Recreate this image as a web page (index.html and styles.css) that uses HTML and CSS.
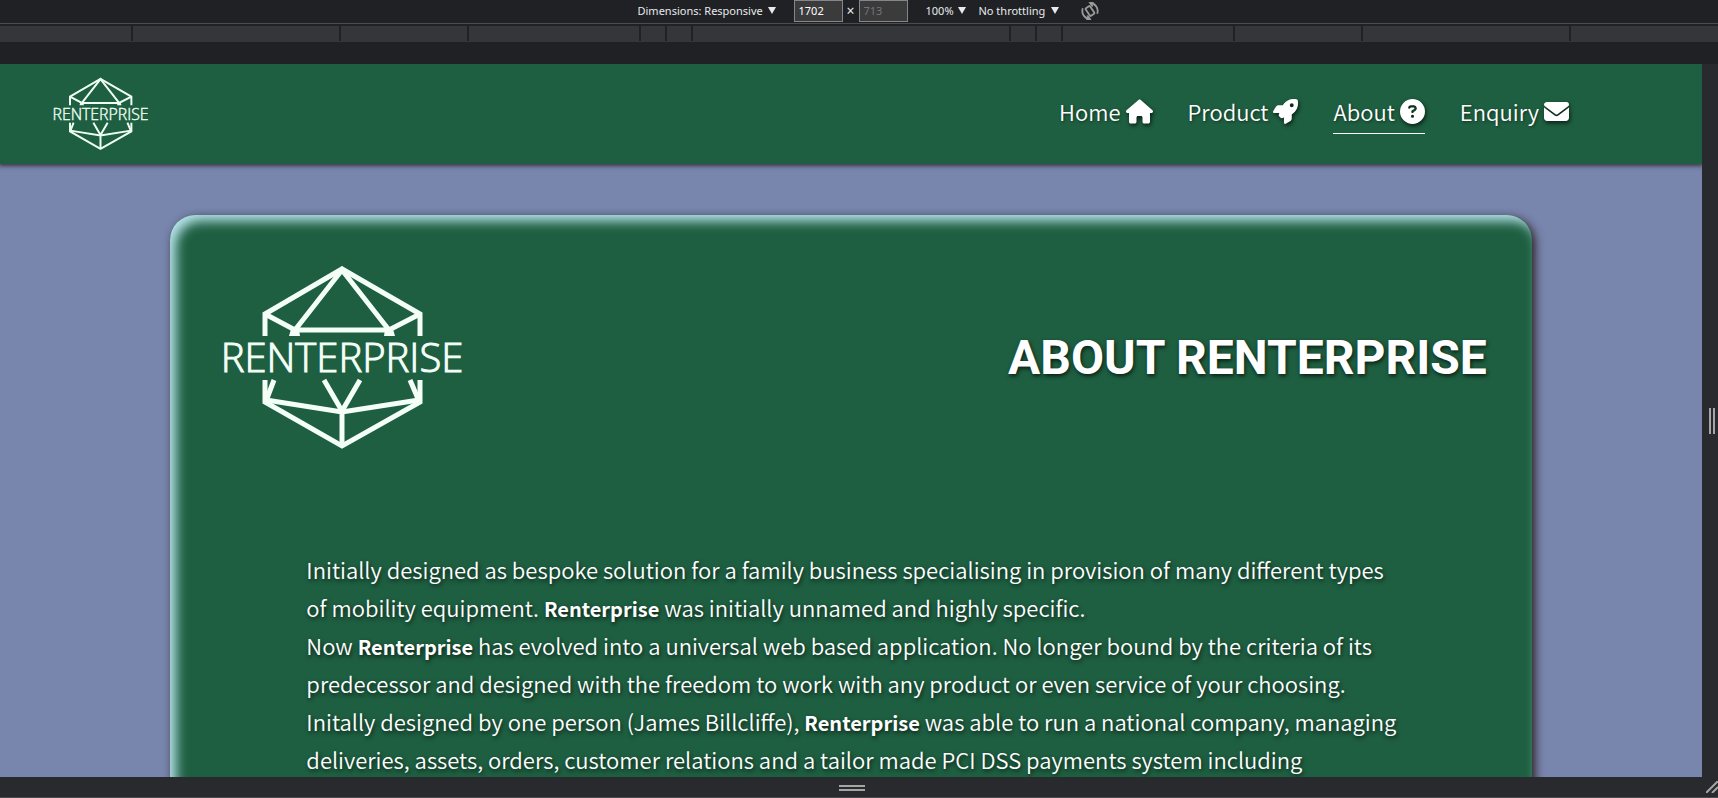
FILE: index.html
```
<!DOCTYPE html>
<html lang="en">
<head>
<meta charset="utf-8">
<title>About Renterprise</title>
<link rel="stylesheet" href="styles.css">
</head>
<body>
<svg class="defs" aria-hidden="true">
  <symbol id="logo" viewBox="0 0 240 186" overflow="visible">
    <g fill="none" stroke="currentColor" stroke-width="5">
      <path d="M43 71V49L120 4L198 49V71"/>
      <path d="M43 49L73 65H167L198 49M73 65L120 5L167 65"/>
      <path d="M43 115V137L120 181L198 137V115"/>
      <path d="M44 135L120 147L197 135M120 147V181"/>
      <path d="M102 115L120 146L138 115M52 115L44 136M188 115L197 136"/>
    </g>
    <path fill="currentColor" d="M69 64H77L78 71H67ZM163 64H171L173 71H162Z"/>
    <text class="logo-text" x="120" y="107" text-anchor="middle">RENTERPRISE</text>
  </symbol>
  <symbol id="caret" viewBox="0 0 8 7"><path fill="currentColor" d="M0 0H8L4 7Z"/></symbol>
</svg>

<div class="toolbar">
  <div class="picker">
    <select class="select select-device" aria-label="Device"><option>Dimensions: Responsive</option></select>
    <svg class="caret"><use href="#caret"/></svg>
  </div>
  <div class="size">
    <input class="size-input" type="text" value="1702" aria-label="Width">
    <span class="times">×</span>
    <input class="size-input" type="text" placeholder="713" aria-label="Height">
  </div>
  <div class="picker">
    <select class="select select-zoom" aria-label="Zoom"><option>100%</option></select>
    <svg class="caret"><use href="#caret"/></svg>
  </div>
  <div class="picker">
    <select class="select select-network" aria-label="Throttling"><option>No throttling</option></select>
    <svg class="caret"><use href="#caret"/></svg>
  </div>
  <button class="rotate" type="button" aria-label="Rotate">
    <svg viewBox="0 0 20 20" width="18" height="18" fill="none" stroke="currentColor" stroke-width="2">
      <rect x="7" y="5" width="6" height="10" rx="1" transform="rotate(-35 10 10)"/>
      <path d="M10 1A9 9 0 0 1 18 13M10 19A9 9 0 0 1 2 7M13 5L10 1L14 0M7 15L10 19L6 20"/>
    </svg>
  </button>
</div>

<div class="ruler">
  <span class="mark mark-first"></span><span class="mark w-xl"></span><span class="mark w-m"></span><span class="mark w-l"></span><span class="mark w-s"></span><span class="mark w-s"></span><span class="mark w-full"></span><span class="mark w-s"></span><span class="mark w-s"></span><span class="mark w-l"></span><span class="mark w-m"></span><span class="mark w-xl"></span><span class="mark mark-last"></span>
</div>

<div class="device">
  <div class="page">
    <header class="site-header">
      <a href="#" class="brand" aria-label="Renterprise"><svg class="brand-logo" viewBox="0 0 240 186"><use href="#logo"/></svg></a>
      <nav class="nav">
        <a class="nav-link" href="#">Home
          <svg class="icon icon-wide" viewBox="0 0 576 512"><path d="M575.8 255.500c0 18-15 32.100-32 32.100h-32l.7 160.200c0 2.700-.2 5.400-.5 8.100V472c0 22.100-17.900 40-40 40H456c-1.100 0-2.200 0-3.300-.1c-1.400 .1-2.800 .1-4.200 .1H416 392c-22.100 0-40-17.900-40-40V448 384c0-17.700-14.300-32-32-32H256c-17.700 0-32 14.300-32 32v64 24c0 22.100-17.900 40-40 40H160 128.100c-1.500 0-3-.1-4.500-.2c-1.200 .1-2.400 .2-3.600 .2H104c-22.100 0-40-17.900-40-40V360c0-.9 0-1.900 .1-2.800V287.600H32c-18 0-32-14-32-32.100c0-9 3-17 10-24L266.400 8c7-7 15-8 22-8s15 2 21 7L564.800 231.500c8 7 12 15 11 24z"/></svg></a>
        <a class="nav-link" href="#">Product
          <svg class="icon" viewBox="0 0 512 512"><path d="M156.600 384.900L125.700 354c-8.500-8.500-11.500-20.800-7.700-32.200c3-8.900 7-20.500 11.800-33.800L24 288c-8.600 0-16.600-4.600-20.900-12.100s-4.200-16.700 .2-24.100l52.500-88.500c13-21.900 36.500-35.300 61.900-35.300l82.300 0c2.400-4 4.800-7.700 7.200-11.300C289.100-4.100 411.100-8.100 483.900 5.300c11.600 2.100 20.600 11.200 22.800 22.800c13.400 72.900 9.300 194.800-111.400 276.700c-3.500 2.400-7.300 4.800-11.300 7.200v82.300c0 25.400-13.400 49-35.300 61.900l-88.500 52.500c-7.400 4.400-16.600 4.500-24.100 .2s-12.100-12.200-12.100-20.900V380.800c-14.100 4.900-26.400 8.900-35.700 11.900c-11.200 3.600-23.400 .5-31.800-7.800zM384 168a40 40 0 1 0 0-80 40 40 0 1 0 0 80z"/></svg></a>
        <a class="nav-link active" href="#" aria-current="page">About
          <svg class="icon" viewBox="0 0 512 512"><path d="M256 512A256 256 0 1 0 256 0a256 256 0 1 0 0 512zM169.800 165.300c7.900-22.300 29.100-37.300 52.800-37.300h58.300c34.900 0 63.100 28.300 63.100 63.100c0 22.600-12.100 43.500-31.700 54.800L280 264.400c-.2 13-10.900 23.600-24 23.600c-13.300 0-24-10.700-24-24V250.500c0-8.600 4.600-16.500 12.100-20.800l44.300-25.400c4.700-2.700 7.600-7.700 7.600-13.100c0-8.400-6.800-15.100-15.100-15.100H222.600c-3.400 0-6.400 2.100-7.500 5.300l-.4 1.200c-4.400 12.500-18.200 19-30.600 14.600s-19-18.200-14.600-30.600l.4-1.200zM224 352a32 32 0 1 1 64 0 32 32 0 1 1 -64 0z"/></svg></a>
        <a class="nav-link" href="#">Enquiry
          <svg class="icon" viewBox="0 0 512 512"><path d="M48 64C21.500 64 0 85.500 0 112c0 15.100 7.100 29.300 19.200 38.400L236.800 313.600c11.400 8.500 27 8.500 38.400 0L492.800 150.400c12.100-9.100 19.200-23.300 19.200-38.400c0-26.500-21.500-48-48-48H48zM0 176V384c0 35.300 28.700 64 64 64H448c35.300 0 64-28.700 64-64V176L294.400 339.200c-22.800 17.100-54 17.100-76.800 0L0 176z"/></svg></a>
      </nav>
    </header>
    <main class="card">
      <div class="card-head">
        <svg class="card-logo" viewBox="0 0 240 186" role="img" aria-label="Renterprise"><use href="#logo"/></svg>
        <h1 class="title">ABOUT RENTERPRISE</h1>
      </div>
      <p class="copy">
        Initially designed as bespoke solution for a family business specialising in provision of many different types<br>
        of mobility equipment. <strong>Renterprise</strong> was initially unnamed and highly specific.<br>
        Now <strong>Renterprise</strong> has evolved into a universal web based application. No longer bound by the criteria of its<br>
        predecessor and designed with the freedom to work with any product or even service of your choosing.<br>
        Initally designed by one person (James Billcliffe), <strong>Renterprise</strong> was able to run a national company, managing<br>
        deliveries, assets, orders, customer relations and a tailor made PCI DSS payments system including
      </p>
    </main>
  </div>
  <div class="resizer resizer-right"><span class="grip grip-v"></span></div>
  <div class="resizer resizer-bottom"><span class="grip grip-h"></span></div>
  <div class="resizer resizer-corner">
    <svg viewBox="0 0 12 12" width="12" height="12" stroke="#a5a5a5" stroke-width="2"><path d="M0 12L12 0M6 12L12 6"/></svg>
  </div>
</div>
</body>
</html>
```

FILE: styles.css
```
* {
  box-sizing: border-box;
}

body {
  margin: 0;
  height: 100vh;
  display: flex;
  flex-direction: column;
  overflow: hidden;
  background: #202124;
  color: #fff;
  font-family: "Noto Sans CJK SC", sans-serif;
}

.defs {
  position: absolute;
  width: 0;
  height: 0;
}

/* Device toolbar */
.toolbar {
  flex: none;
  height: 24px;
  display: flex;
  justify-content: center;
  align-items: center;
  gap: 18px;
  padding: 0 0 2px 18px;
  border-bottom: 1px solid #4a4c50;
  font-family: "Noto Sans", sans-serif;
  font-size: 11px;
  color: #e8eaed;
}

.picker {
  display: flex;
  align-items: center;
  gap: 3px;
}

.picker + .picker {
  margin-left: -5px;
}

.select {
  appearance: none;
  padding: 0;
  border: 0;
  background: none;
  color: inherit;
  font: inherit;
}

.select-device {
  width: 127px;
}

.select-zoom {
  width: 29px;
}

.select-network {
  width: 69px;
}

.caret {
  width: 8px;
  height: 7px;
}

.size {
  display: flex;
  align-items: center;
  gap: 4px;
}

.size-input {
  width: 49px;
  height: 22px;
  padding: 0 4px;
  border: 1px solid #85868a;
  background: #3b3b3b;
  color: #fff;
  font: inherit;
}

.size-input::placeholder {
  color: #757575;
}

.times {
  width: 8px;
  font-size: 14px;
  line-height: 16px;
}

.rotate {
  display: flex;
  margin-left: 4px;
  padding: 0;
  border: 0;
  background: none;
  color: #9a9a9a;
}

/* Breakpoint ruler */
.ruler {
  flex: none;
  display: flex;
  height: 16px;
  margin: 2px 0 22px;
  background: #35363a;
}

.mark {
  flex: none;
  height: 15px;
  border-left: 2px solid #202124;
}

.mark-first {
  flex: 1 0 0;
  border: 0;
}

.mark-last {
  flex: 1 0 18px;
}

.w-s {
  width: 26px;
}

.w-m {
  width: 128px;
}

.w-l {
  width: 172px;
}

.w-xl {
  width: 208px;
}

.w-full {
  width: 318px;
}

/* Device frame */
.device {
  flex: 1;
  min-height: 0;
  display: grid;
  grid-template-columns: minmax(0, 1fr) 16px;
  grid-template-rows: minmax(0, 1fr) 20px;
  border-bottom: 1px solid #4a4c50;
}

.resizer {
  display: flex;
  align-items: center;
  justify-content: center;
  background: #292a2d;
}

.resizer-right {
  padding-left: 4px;
}

.resizer-bottom {
  padding: 2px 0 0 2px;
}

.resizer-corner {
  justify-content: flex-end;
}

.grip-v {
  width: 6px;
  height: 26px;
  border: solid #a5a5a5;
  border-width: 0 2px;
}

.grip-h {
  width: 26px;
  height: 6px;
  border: solid #a5a5a5;
  border-width: 2px 0;
}

/* Site */
.page {
  overflow: hidden;
  background: #7885ad;
}

.site-header {
  position: relative;
  display: flex;
  align-items: center;
  justify-content: space-between;
  height: 100px;
  padding: 0 133px 0 53px;
  background: #1e5f41;
  box-shadow: 0 1px 4px 1px rgba(50, 35, 35, 0.8);
}

.brand {
  display: flex;
  color: #eefff4;
}

.brand-logo {
  width: 95px;
  height: 74px;
  overflow: visible;
}

.logo-text {
  fill: currentColor;
  stroke: currentColor;
  stroke-width: 1px;
  font-family: "Open Sans", sans-serif;
  font-size: 40px;
  font-weight: 300;
}

.nav {
  display: flex;
  gap: 35px;
}

.nav-link {
  display: flex;
  align-items: center;
  gap: 5px;
  padding-bottom: 5px;
  border-bottom: 1px solid transparent;
  color: #fff;
  font-size: 22px;
  font-weight: 350;
  line-height: 34px;
  text-decoration: none;
  text-shadow: 1px 1px 3px rgba(0, 0, 0, 0.5);
}

.nav-link.active {
  border-color: #fff;
}

.icon {
  width: 25px;
  height: 25px;
  fill: #fff;
  filter: drop-shadow(1px 2px 2px rgba(0, 0, 0, 0.7));
}

.icon-wide {
  width: 27px;
}

.card {
  width: 80%;
  min-height: 800px;
  margin: 51px auto 0;
  border-radius: 25px;
  background: #1e5f41;
  box-shadow:
    inset 6px 6px 12px #b8e4ec,
    3px 3px 10px #2c2020;
}

.card-head {
  display: flex;
  align-items: center;
  justify-content: space-between;
  height: 286px;
  padding: 0 45px 0 52px;
}

.card-logo {
  width: 240px;
  height: 186px;
  overflow: visible;
  color: #f4fff8;
}

.title {
  margin: 0;
  font-family: Roboto, sans-serif;
  font-size: 48px;
  font-weight: 700;
  line-height: 56px;
  white-space: nowrap;
  text-shadow: 1px 2px 4px rgba(0, 0, 0, 0.7);
}

.copy {
  margin: 0;
  padding: 49px 0 0 10%;
  font-size: 22px;
  font-weight: 350;
  line-height: 38px;
  white-space: nowrap;
  text-shadow: 1px 2px 4px rgba(0, 0, 0, 0.7);
}

.copy strong {
  font-size: 20px;
  font-weight: 700;
  line-height: 1;
}
```
